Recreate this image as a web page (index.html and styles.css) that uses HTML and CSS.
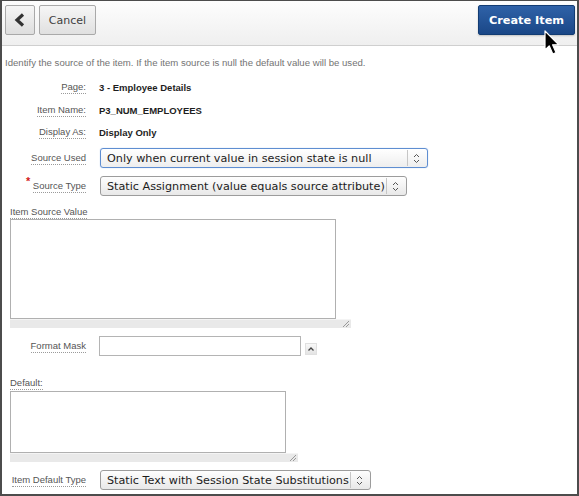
FILE: index.html
```html
<!DOCTYPE html>
<html>
<head>
<meta charset="utf-8">
<link rel="stylesheet" href="styles.css">
</head>
<body>
<div class="frame">
  <header class="toolbar">
    <button class="btn btn-icon" aria-label="Back">
      <svg width="12" height="14" viewBox="0 0 12 14"><polyline points="9,1.5 3,7 9,12.5" fill="none" stroke="#333" stroke-width="3.2" stroke-linejoin="miter"/></svg>
    </button>
    <button class="btn btn-cancel">Cancel</button>
    <span class="spacer"></span>
    <button class="btn btn-primary">Create Item</button>
  </header>
  <main class="content">
    <p class="help">Identify the source of the item. If the item source is null the default value will be used.</p>

    <div class="row row-1"><span class="lbl"><span class="lt">Page:</span></span><span class="val">3 - Employee Details</span></div>
    <div class="row row-2"><span class="lbl"><span class="lt">Item Name:</span></span><span class="val">P3_NUM_EMPLOYEES</span></div>
    <div class="row row-3"><span class="lbl"><span class="lt">Display As:</span></span><span class="val">Display Only</span></div>
    <div class="row row-4"><span class="lbl"><span class="lt">Source Used</span></span>
      <div class="select focus sel-1"><span class="sel-text">Only when current value in session state is null</span><span class="sel-div"></span><svg class="sel-arrows" width="7" height="11" viewBox="0 0 7 11"><polyline points="1,4 3.5,1.5 6,4" fill="none" stroke="#555" stroke-width="1"/><polyline points="1,7 3.5,9.5 6,7" fill="none" stroke="#555" stroke-width="1"/></svg></div>
    </div>
    <div class="row row-5"><span class="lbl"><span class="req">*</span><span class="lt">Source Type</span></span>
      <div class="select sel-2"><span class="sel-text">Static Assignment (value equals source attribute)</span><span class="sel-div"></span><svg class="sel-arrows" width="7" height="11" viewBox="0 0 7 11"><polyline points="1,4 3.5,1.5 6,4" fill="none" stroke="#555" stroke-width="1"/><polyline points="1,7 3.5,9.5 6,7" fill="none" stroke="#555" stroke-width="1"/></svg></div>
    </div>

    <div class="top-label tl-source"><span class="lt">Item Source Value</span></div>
    <div class="ta-wrap ta-source">
      <textarea class="ta"></textarea>
      <div class="ta-bar"><span class="grip"></span></div>
    </div>

    <div class="row row-fm"><span class="lbl"><span class="lt">Format Mask</span></span>
      <input class="text-in" type="text">
      <span class="mini-btn"><svg width="6" height="4" viewBox="0 0 6 4"><polyline points="0.5,3.5 3,1 5.5,3.5" fill="none" stroke="#444" stroke-width="1.3"/></svg></span>
    </div>

    <div class="top-label tl-default"><span class="lt">Default:</span></div>
    <div class="ta-wrap ta-default">
      <textarea class="ta"></textarea>
      <div class="ta-bar"><span class="grip"></span></div>
    </div>

    <div class="row row-dt"><span class="lbl"><span class="lt">Item Default Type</span></span>
      <div class="select sel-3"><span class="sel-text">Static Text with Session State Substitutions</span><span class="sel-div"></span><svg class="sel-arrows" width="7" height="11" viewBox="0 0 7 11"><polyline points="1,4 3.5,1.5 6,4" fill="none" stroke="#555" stroke-width="1"/><polyline points="1,7 3.5,9.5 6,7" fill="none" stroke="#555" stroke-width="1"/></svg></div>
    </div>
  </main>
  <svg class="cursor" width="17" height="27" viewBox="0 0 17 27"><path d="M1,1 L1,20 L5.2,15.8 L8.8,24 L12,22.6 L8.6,14.8 L14.5,14.6 Z" fill="#000" stroke="#fff" stroke-width="1.2" stroke-linejoin="round"/></svg>
</div>
</body>
</html>
```

FILE: styles.css
```css
html, body {
  margin: 0;
  padding: 0;
  background: #fff;
}
.frame {
  position: relative;
  width: 579px;
  height: 496px;
  box-sizing: border-box;
  border: 2px solid #4c4c4c;
  border-top-width: 1px;
  overflow: hidden;
  background: #fff;
  font-family: "Liberation Sans", Arial, sans-serif;
}
.toolbar {
  display: flex;
  align-items: flex-start;
  gap: 4px;
  height: 45px;
  box-sizing: border-box;
  padding: 4px 2px 0 3px;
  border-bottom: 1px solid #cfcfcf;
  background: linear-gradient(#fdfdfd, #efefef);
}
.spacer { flex: 1; }
.btn {
  height: 30px;
  box-sizing: border-box;
  margin: 0;
  padding: 0;
  border-radius: 2px;
  font-family: "DejaVu Sans", sans-serif;
  font-size: 11px;
  cursor: default;
}
.btn-icon {
  width: 30px;
  border: 1px solid #a9a9a9;
  background: linear-gradient(#f6f6f6, #dedede);
  display: flex;
  align-items: center;
  justify-content: center;
}
.btn-icon svg { display: block; margin-left: -1px; }
.btn-cancel {
  width: 57px;
  border: 1px solid #a9a9a9;
  background: linear-gradient(#f6f6f6, #e0e0e0);
  color: #404040;
}
.btn-primary {
  width: 97px;
  border: 1px solid #123c73;
  background: linear-gradient(#2f62a8, #1a4787);
  color: #fff;
  font-weight: bold;
  font-size: 11.3px;
  box-shadow: 0 1px 2px rgba(0,0,0,0.2);
}
.content {
  display: flex;
  flex-direction: column;
}
.help {
  margin: 11px 0 0 3px;
  font-size: 9.6px;
  line-height: 12px;
  color: #737373;
}
.row {
  display: flex;
  align-items: center;
  height: 22px;
}
.row-1 { margin-top: 7px; }
.row-2 { margin-top: 1px; }
.row-3 { margin-top: 0; }
.row-4 { margin-top: 4px; }
.row-5 { margin-top: 6px; }
.row-fm { margin-top: 7px; }
.row-dt { margin-top: 7px; }
.lbl {
  width: 84px;
  flex: none;
  text-align: right;
  font-size: 9.5px;
  color: #555;
  position: relative;
}
.lt {
  display: inline-block;
  line-height: 11px;
  padding-bottom: 1px;
  border-bottom: 1px dotted #9a9a9a;
}
.req {
  position: absolute;
  left: 24px;
  top: -5px;
  color: #d21a1a;
  font-size: 11px;
  font-weight: bold;
}
.val {
  margin-left: 13px;
  font-size: 9.5px;
  font-weight: bold;
  color: #1e1e1e;
}
.select {
  margin-left: 14px;
  height: 20px;
  box-sizing: border-box;
  display: flex;
  align-items: center;
  border: 1px solid #9c9c9c;
  border-radius: 3px;
  background: linear-gradient(#fefefe, #e8e8e8);
  font-family: "DejaVu Sans", sans-serif;
  font-size: 11.2px;
  color: #1c1c1c;
  padding-left: 6px;
  white-space: nowrap;
}
.select.focus {
  border-color: #5f8ed1;
  box-shadow: 0 0 1px #8fb3e6;
  background: linear-gradient(#ffffff, #eeeeee);
}
.sel-1 { width: 328px; }
.sel-2 { width: 307px; }
.sel-3 { width: 271px; }
.sel-text { flex: 1; overflow: hidden; }
.sel-div {
  width: 1px;
  height: 16px;
  background: #c6c6c6;
}
.sel-arrows { margin: 0 7px 0 5px; display: block; }
.top-label {
  margin-left: 8px;
  font-size: 9.5px;
  color: #555;
}
.tl-source { margin-top: 9px; line-height: 12px; }
.tl-default { margin-top: 20px; line-height: 12px; }
.ta-wrap {
  margin-left: 8px;
  display: flex;
  flex-direction: column;
  align-items: flex-start;
}
.ta-source { margin-top: 0; }
.ta-default { margin-top: 1px; }
.ta {
  display: block;
  margin: 0;
  padding: 0;
  box-sizing: border-box;
  border: 1px solid #b0b0b0;
  resize: none;
  background: #fff;
}
.ta-source .ta { width: 326px; height: 100px; }
.ta-default .ta { width: 276px; height: 62px; }
.ta-bar {
  position: relative;
  height: 9px;
  background: #e9e9e9;
  border-top: 1px solid #f4f4f4;
  box-sizing: border-box;
}
.ta-source .ta-bar { width: 341px; }
.ta-default .ta-bar { width: 288px; }
.grip {
  position: absolute;
  right: 2px;
  bottom: 1px;
  width: 6px;
  height: 6px;
  background: linear-gradient(135deg, transparent 45%, #999 45%, #999 55%, transparent 55%, transparent 70%, #999 70%, #999 80%, transparent 80%);
}
.text-in {
  margin: 0 0 0 13px;
  width: 202px;
  height: 20px;
  box-sizing: border-box;
  border: 1px solid #b4b4b4;
  padding: 0;
  background: #fff;
}
.mini-btn {
  margin-left: 4px;
  margin-top: 6px;
  width: 12px;
  height: 12px;
  box-sizing: border-box;
  border: 1px solid #e0e0e0;
  background: linear-gradient(#f8f8f8, #e4e4e4);
  display: flex;
  align-items: center;
  justify-content: center;
}
.mini-btn svg { display: block; }
.cursor {
  position: absolute;
  left: 542px;
  top: 29px;
}
```
